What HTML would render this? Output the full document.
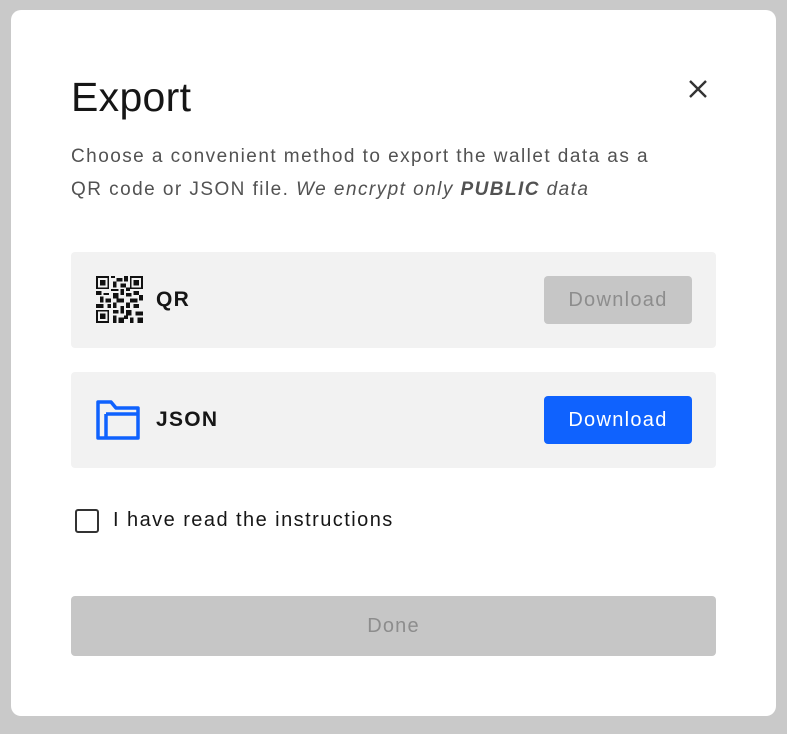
<!DOCTYPE html>
<html><head><style>
html,body{margin:0;padding:0;width:787px;height:734px;overflow:hidden;background:#c9c9c9;font-family:"Liberation Sans",sans-serif;}
.modal{position:absolute;left:11px;top:10px;width:765px;height:706px;background:#fff;border-radius:10px;}
.title{position:absolute;left:60px;top:64px;font-size:41px;color:#161616;letter-spacing:0.3px;}
.close{position:absolute;left:676px;top:68px;}
.desc{position:absolute;left:60px;top:130px;font-size:19px;line-height:33px;color:#525252;width:680px;letter-spacing:1.45px;}
.card{position:absolute;left:60px;width:645px;height:96px;background:#f2f2f2;border-radius:4px;}
.lbl{position:absolute;left:85px;top:36px;font-size:21px;font-weight:bold;color:#161616;letter-spacing:1.3px;}
.btn{position:absolute;left:473px;top:24px;width:148px;height:48px;border-radius:4px;font-size:20px;line-height:48px;text-align:center;letter-spacing:1.3px;}
.cb{position:absolute;left:64px;top:499px;width:20px;height:20px;border:2px solid #333;border-radius:3px;background:#fff;}
.cbt{position:absolute;left:102px;top:499px;font-size:20px;color:#161616;letter-spacing:1.45px;}
.done{position:absolute;left:60px;top:586px;width:645px;height:60px;background:#c6c6c6;border-radius:4px;color:#8d8d8d;font-size:20px;line-height:60px;text-align:center;letter-spacing:1.2px;}
</style></head><body>
<div class="modal">
<div class="title">Export</div>
<svg class="close" width="22" height="22" viewBox="0 0 22 22"><path d="M3 3L19 19M19 3L3 19" stroke="#333" stroke-width="2.4"/></svg>
<div class="desc">Choose a convenient method to export the wallet data as a<br>QR code or JSON file. <i>We encrypt only <b>PUBLIC</b> data</i></div>
<div class="card" style="top:242px">
<svg style="position:absolute;left:25px;top:24px" width="47" height="47" viewBox="0 0 25 25" shape-rendering="crispEdges">
<g fill="#111">
<path d="M0 0h7v7h-7zM1 1v5h5v-5zM2 2h3v3h-3z" fill-rule="evenodd"/>
<path d="M18 0h7v7h-7zM19 1v5h5v-5zM20 2h3v3h-3z" fill-rule="evenodd"/>
<path d="M0 18h7v7h-7zM1 19v5h5v-5zM2 20h3v3h-3z" fill-rule="evenodd"/>
<rect x="8" y="0" width="2" height="1"/><rect x="11" y="1" width="3" height="2"/><rect x="15" y="0" width="2" height="3"/><rect x="9" y="3" width="2" height="3"/><rect x="13" y="4" width="3" height="2"/><rect x="8" y="7" width="4" height="1"/><rect x="13" y="7" width="2" height="3"/><rect x="16" y="6" width="2" height="2"/>
<rect x="0" y="8" width="3" height="2"/><rect x="4" y="9" width="3" height="1"/><rect x="2" y="11" width="2" height="3"/><rect x="5" y="12" width="3" height="2"/><rect x="0" y="15" width="4" height="2"/><rect x="6" y="15" width="2" height="2"/>
<rect x="9" y="9" width="3" height="3"/><rect x="11" y="12" width="4" height="2"/><rect x="9" y="14" width="2" height="3"/><rect x="16" y="9" width="3" height="2"/><rect x="20" y="8" width="3" height="2"/><rect x="23" y="10" width="2" height="3"/><rect x="18" y="12" width="4" height="2"/><rect x="16" y="14" width="2" height="3"/><rect x="20" y="15" width="3" height="2"/>
<rect x="9" y="18" width="3" height="2"/><rect x="13" y="16" width="2" height="4"/><rect x="9" y="21" width="2" height="4"/><rect x="12" y="22" width="3" height="3"/><rect x="16" y="18" width="3" height="3"/><rect x="18" y="22" width="2" height="3"/><rect x="21" y="19" width="4" height="2"/><rect x="22" y="22" width="3" height="3"/><rect x="15" y="21" width="2" height="2"/>
</g></svg>
<div class="lbl">QR</div>
<div class="btn" style="background:#c6c6c6;color:#8d8d8d">Download</div>
</div>
<div class="card" style="top:362px">
<svg style="position:absolute;left:25px;top:28px" width="44" height="40" viewBox="0 0 44 40"><path d="M2 2H15L20 8H42V38H2Z M10 14H42 M10 14V38" fill="none" stroke="#0f62fe" stroke-width="3.5" stroke-linejoin="round"/></svg>
<div class="lbl">JSON</div>
<div class="btn" style="background:#0f62fe;color:#fff">Download</div>
</div>
<div class="cb"></div>
<div class="cbt">I have read the instructions</div>
<div class="done">Done</div>
</div>
</body></html>
